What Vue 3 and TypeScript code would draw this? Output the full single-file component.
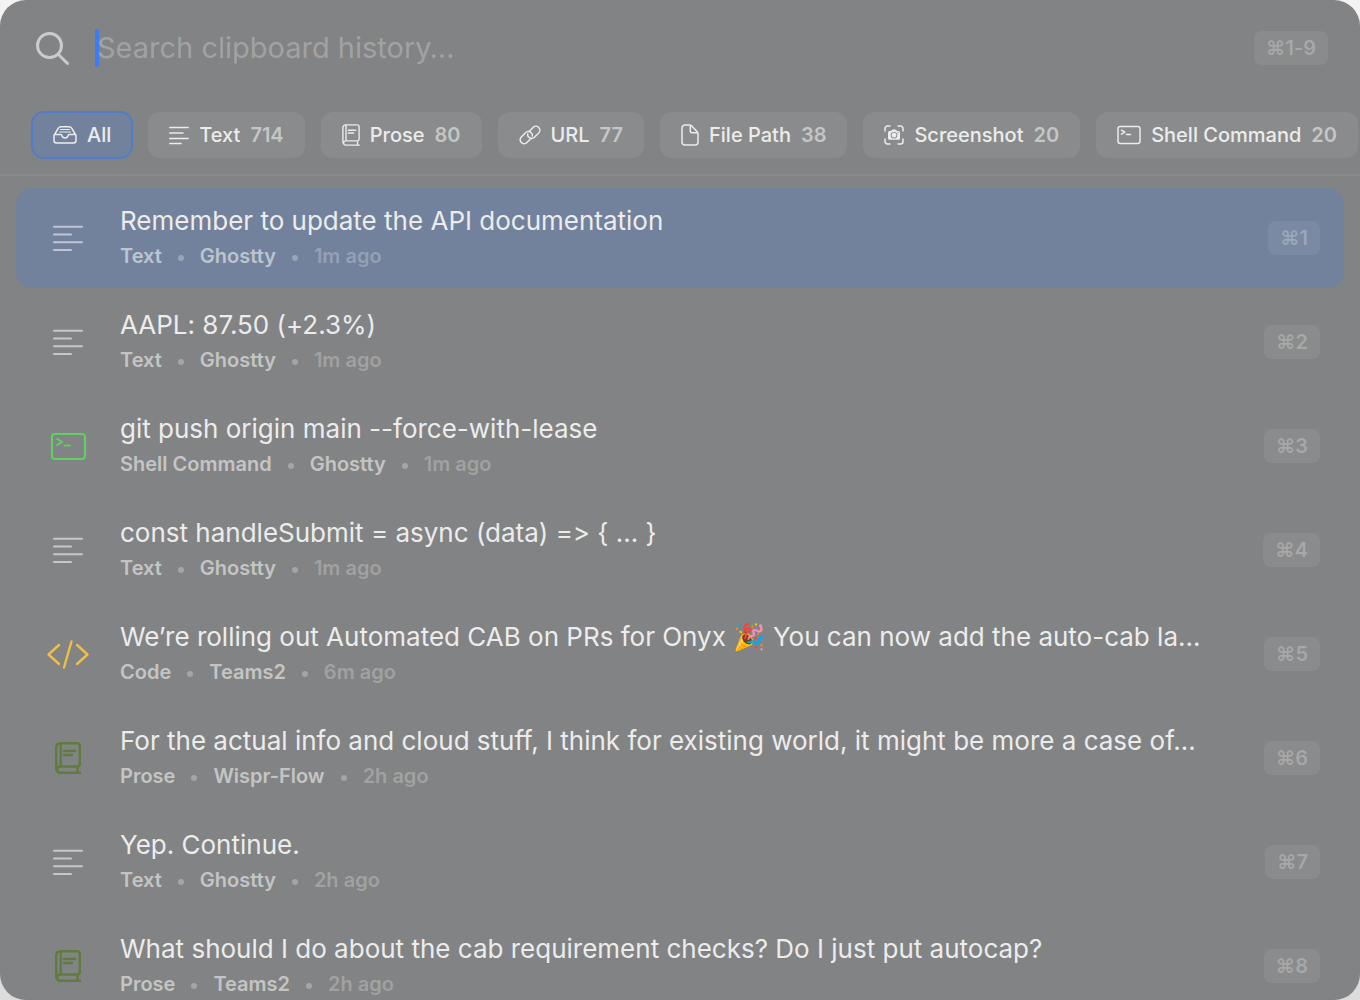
<script setup lang="ts">
import { ref } from 'vue'

type Kind = 'all' | 'text' | 'prose' | 'url' | 'file' | 'screenshot' | 'shell' | 'code'

interface Filter {
  kind: Kind
  label: string
  count?: number
}

interface Clip {
  kind: Kind
  title: string
  type: string
  source: string
  age: string
}

const filters: Filter[] = [
  { kind: 'all', label: 'All' },
  { kind: 'text', label: 'Text', count: 714 },
  { kind: 'prose', label: 'Prose', count: 80 },
  { kind: 'url', label: 'URL', count: 77 },
  { kind: 'file', label: 'File Path', count: 38 },
  { kind: 'screenshot', label: 'Screenshot', count: 20 },
  { kind: 'shell', label: 'Shell Command', count: 20 },
]

const clips: Clip[] = [
  { kind: 'text', title: 'Remember to update the API documentation', type: 'Text', source: 'Ghostty', age: '1m ago' },
  { kind: 'text', title: 'AAPL: 87.50 (+2.3%)', type: 'Text', source: 'Ghostty', age: '1m ago' },
  { kind: 'shell', title: 'git push origin main --force-with-lease', type: 'Shell Command', source: 'Ghostty', age: '1m ago' },
  { kind: 'text', title: 'const handleSubmit = async (data) => { … }', type: 'Text', source: 'Ghostty', age: '1m ago' },
  { kind: 'code', title: 'We’re rolling out Automated CAB on PRs for Onyx 🎉 You can now add the auto-cab la…', type: 'Code', source: 'Teams2', age: '6m ago' },
  { kind: 'prose', title: 'For the actual info and cloud stuff, I think for existing world, it might be more a case of…', type: 'Prose', source: 'Wispr-Flow', age: '2h ago' },
  { kind: 'text', title: 'Yep. Continue.', type: 'Text', source: 'Ghostty', age: '2h ago' },
  { kind: 'prose', title: 'What should I do about the cab requirement checks? Do I just put autocap?', type: 'Prose', source: 'Teams2', age: '2h ago' },
]

const query = ref('')
const activeFilter = ref<Kind>('all')
const selected = ref(0)
</script>

<template>
  <main class="panel">
    <header class="search">
      <svg class="magnifier" viewBox="0 -1 34 34" width="34" height="34" aria-hidden="true">
        <circle cx="13.500" cy="13.500" r="12" />
        <path d="M22.500 22.500 31.500 31.500" />
      </svg>
      <div class="field">
        <span v-if="!query" class="caret"></span>
        <input v-model="query" type="text" aria-label="Search clipboard history" placeholder="Search clipboard history…" />
      </div>
      <kbd>⌘1-9</kbd>
    </header>

    <nav class="filters" aria-label="Filter by type">
      <button
        v-for="f in filters"
        :key="f.kind"
        type="button"
        class="chip"
        :class="{ active: f.kind === activeFilter }"
        @click="activeFilter = f.kind"
      >
        <svg v-if="f.kind === 'all'" viewBox="0 0 24 20" width="24" height="20" aria-hidden="true">
          <path d="M1 10.500 5.200 3.400Q6.200 1.800 8 1.800H16Q17.800 1.800 18.800 3.400L23 10.500V15.500Q23 18 20.500 18H3.500Q1 18 1 15.500V10.500Q1 9.500 2 9.500H7.800Q8.700 9.500 8.900 10.500A3.200 3.200 0 0 0 15.100 10.500Q15.300 9.500 16.200 9.500H22Q23 9.500 23 10.500" />
          <path d="M7.500 4.500H16.500M6.500 7H17.500" class="fine" />
        </svg>
        <svg v-else-if="f.kind === 'text'" viewBox="0 0 20 20" width="20" height="20" aria-hidden="true">
          <path d="M.8 2.500H19.200M.8 8H14M.8 13.500H19.200M.8 18.500H12" />
        </svg>
        <svg v-else-if="f.kind === 'prose'" viewBox="0 0 26 32" width="18" height="22" aria-hidden="true" class="book">
          <path d="M1.200 27.500V5.200a4 4 0 0 1 4-4H21.800a3 3 0 0 1 3 3V22a2.500 2.500 0 0 1-2.500 2.500H5a3.500 3.200 0 0 0 0 6.300H25M22.500 24.500v6.300M5.700 1.200V24.500M9 9H20M9 13H17" />
        </svg>
        <svg v-else-if="f.kind === 'url'" viewBox="0 0 22 22" width="22" height="22" aria-hidden="true">
          <g transform="rotate(-45 11 11)">
            <path d="M9.500 14.200H3.500a4 4 0 0 1-4-4 4 4 0 0 1 4-4H9.500a4 4 0 0 1 4 4Q13.500 12.500 12 13.300" />
            <path d="M12.500 7.800H18.500a4 4 0 0 1 4 4 4 4 0 0 1-4 4H12.500a4 4 0 0 1-4-4Q8.500 9.500 10 8.700" />
          </g>
        </svg>
        <svg v-else-if="f.kind === 'file'" viewBox="0 0 18 22" width="18" height="22" aria-hidden="true">
          <path d="M4 1H8.500Q9.700 1 10.500 1.800L16.200 7.800Q17 8.600 17 9.800V18a3 3 0 0 1-3 3H4a3 3 0 0 1-3-3V4a3 3 0 0 1 3-3ZM9.300 1.200V7.200Q9.300 8.700 10.800 8.700H16.800" />
        </svg>
        <svg v-else-if="f.kind === 'screenshot'" viewBox="0 0 20 20" width="20" height="20" aria-hidden="true">
          <path d="M1 6V3.500A2.500 2.500 0 0 1 3.500 1H6M14 1H16.500A2.500 2.500 0 0 1 19 3.500V6M19 14V16.500A2.500 2.500 0 0 1 16.500 19H14M6 19H3.500A2.500 2.500 0 0 1 1 16.500V14" />
          <path class="solid" fill-rule="evenodd" d="M5.500 6H7L7.900 4.900Q8.100 4.600 8.500 4.600H11.500Q11.900 4.600 12.100 4.900L13 6H14.500Q16 6 16 7.500V13.200Q16 14.700 14.500 14.700H5.500Q4 14.700 4 13.200V7.500Q4 6 5.500 6ZM10 6.900A3.300 3.300 0 1 0 10 13.500 3.300 3.300 0 1 0 10 6.900ZM10 7.800A2.400 2.400 0 1 1 10 12.600 2.400 2.400 0 1 1 10 7.800ZM14.100 7.200a.6.6 0 1 0 .01 0Z" />
        </svg>
        <svg v-else viewBox="0 0 24 20" width="24" height="20" aria-hidden="true">
          <rect x="1" y="1.500" width="22" height="17" rx="2.200" />
          <path d="M4.500 5.200 7.800 7.200 4.500 9.200M9.500 9.500H13.500" />
        </svg>
        <span>{{ f.label }}</span>
        <span v-if="f.count" class="count">{{ f.count }}</span>
      </button>
    </nav>

    <ul class="clips">
      <li v-for="(c, i) in clips" :key="i">
        <button type="button" class="row" :class="{ selected: i === selected }" @click="selected = i">
          <span class="icon" :class="c.kind">
            <svg v-if="c.kind === 'text'" viewBox="0 0 30 28" width="30" height="28" aria-hidden="true">
              <path d="M1 2.800H29M1 10.500H18M1 18.300H29M1 26H18" />
            </svg>
            <svg v-else-if="c.kind === 'shell'" viewBox="0 0 36 28" width="36" height="28" aria-hidden="true">
              <rect x="2" y="2" width="33" height="25" rx="3" />
              <path d="M7.200 7 12 10 7.200 13M14.500 13.500H20" />
            </svg>
            <svg v-else-if="c.kind === 'code'" viewBox="0 0 42 30" width="42" height="30" aria-hidden="true">
              <path d="M12 6 1.500 15.500 12 25M24.500 2.500 17 28.500M30 6 40.500 15.500 30 25" />
            </svg>
            <svg v-else viewBox="0 0 26 32" width="26" height="32" aria-hidden="true">
              <path d="M1.200 27.500V5.200a4 4 0 0 1 4-4H21.800a3 3 0 0 1 3 3V22a2.500 2.500 0 0 1-2.500 2.500H5a3.500 3.200 0 0 0 0 6.300H25M22.500 24.500v6.300M5.700 1.200V24.500M9 9H20M9 13H17" />
            </svg>
          </span>
          <span class="body">
            <span class="title">{{ c.title }}</span>
            <span class="meta">
              <span>{{ c.type }}</span>
              <i class="dot"></i>
              <span>{{ c.source }}</span>
              <i class="dot"></i>
              <span class="age">{{ c.age }}</span>
            </span>
          </span>
          <kbd>⌘{{ i + 1 }}</kbd>
        </button>
      </li>
    </ul>
  </main>
</template>

<style>
body {
  background: linear-gradient(#f4f4f4, #dcdcdc);
}
</style>

<style scoped>
.panel {
  box-sizing: border-box;
  display: flex;
  flex-direction: column;
  height: 100vh;
  overflow: hidden;
  border-radius: 26px;
  background: #828384;
  color: #ececec;
  font-family: Inter, "Liberation Sans", "Noto Color Emoji", sans-serif;
  font-variant-ligatures: none;
}

svg {
  flex: none;
  overflow: visible;
  fill: none;
  stroke: currentColor;
  stroke-linecap: round;
  stroke-linejoin: round;
}

button {
  border: 0;
  background: none;
  color: inherit;
  font: inherit;
  font-variant-ligatures: none;
  text-align: left;
}

kbd {
  flex: none;
  padding: 0 12px;
  border-radius: 8px;
  background: rgba(255, 255, 255, 0.07);
  color: rgba(255, 255, 255, 0.25);
  font-family: inherit;
  font-size: 20px;
  font-weight: 600;
  line-height: 34px;
}

.search {
  display: flex;
  flex: none;
  align-items: center;
  height: 96px;
  padding: 0 32px 0 36px;
}

.magnifier {
  color: #cbcbcc;
  stroke-width: 3;
}

.field {
  display: flex;
  flex: 1;
  align-items: center;
  margin-left: 25px;
}

.caret {
  width: 4px;
  height: 38px;
  margin-right: -2px;
  border-radius: 2px;
  background: #3b7bf6;
}

input {
  flex: 1;
  min-width: 0;
  padding: 0;
  border: 0;
  outline: 0;
  background: none;
  color: inherit;
  font: 400 29px/38px Inter, "Liberation Sans", sans-serif;
}

input::placeholder {
  color: #a1a2a3;
  opacity: 1;
}

.filters {
  display: flex;
  flex: none;
  align-items: center;
  gap: 16px;
  height: 48px;
  padding: 15px 32px;
  border-bottom: 2px solid #88898a;
  overflow: hidden;
}

.chip {
  display: flex;
  flex: none;
  align-items: center;
  gap: 10px;
  height: 46px;
  padding: 0 21px;
  border-radius: 12px;
  background: #8a8b8c;
  font-size: 20px;
  font-weight: 500;
  line-height: 24px;
  white-space: nowrap;
}

.chip.active {
  background: #72829c;
  box-shadow: 0 0 0 1px #507cca, inset 0 0 0 1px #507cca;
}

.chip svg {
  stroke-width: 1.500;
}

.chip .book {
  stroke-width: 2;
}

.chip .fine {
  stroke-width: 1;
}

.chip .solid {
  fill: currentColor;
  stroke: none;
}

.count {
  color: #c5c6c6;
  font-weight: 600;
}

.clips {
  display: flex;
  flex: 1;
  flex-direction: column;
  gap: 4px;
  min-height: 0;
  margin: 0;
  padding: 12px 16px;
  list-style: none;
  overflow: hidden;
}

.row {
  display: flex;
  align-items: center;
  gap: 24px;
  width: 100%;
  height: 100px;
  padding: 0 24px;
  border-radius: 16px;
}

.row.selected {
  background: #72829c;
}

.icon {
  display: flex;
  flex: none;
  justify-content: center;
  width: 56px;
  color: rgba(255, 255, 255, 0.55);
  stroke-width: 2;
}

.icon.shell {
  color: #62cf63;
}

.icon.code {
  color: #f0bd45;
  stroke-width: 3;
}

.icon.prose {
  color: #5f7c3c;
  stroke-width: 3;
}

.icon.code svg,
.icon.prose svg {
  stroke-width: 2.400;
}

.body {
  display: flex;
  flex: 1;
  flex-direction: column;
  gap: 6px;
  min-width: 0;
  padding-bottom: 2px;
}

.title {
  overflow: hidden;
  font-size: 26px;
  line-height: 32px;
  text-overflow: ellipsis;
  white-space: nowrap;
}

.meta {
  display: flex;
  align-items: center;
  gap: 16px;
  color: rgba(255, 255, 255, 0.55);
  font-size: 20px;
  font-weight: 600;
  line-height: 26px;
}

.dot {
  width: 6px;
  height: 6px;
  margin-top: 4px;
  border-radius: 50%;
  background: rgba(255, 255, 255, 0.28);
}

.age {
  color: rgba(255, 255, 255, 0.25);
}
</style>
